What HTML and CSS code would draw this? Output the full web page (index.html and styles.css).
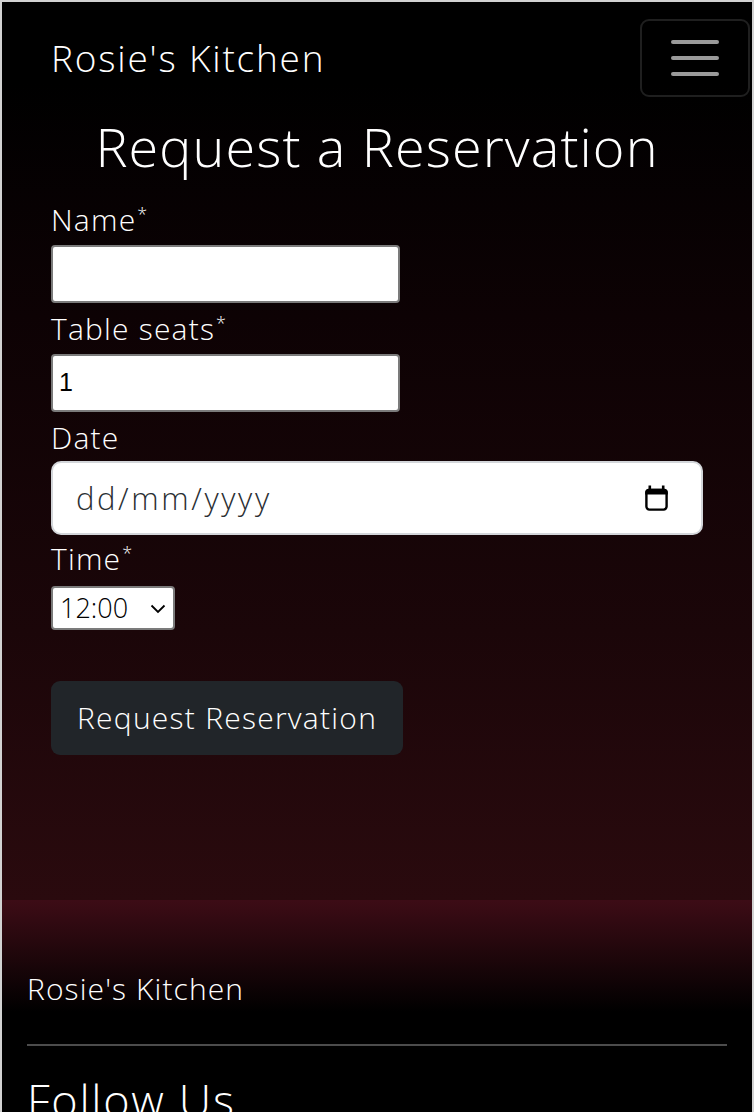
FILE: index.html
```html
<!DOCTYPE html>
<html lang="en">
<head>
<meta charset="utf-8">
<title>Request a Reservation - Rosie's Kitchen</title>
<link rel="stylesheet" href="styles.css">
</head>
<body>
<div class="page">
  <div class="hero">
    <header class="navbar">
      <a class="brand" href="#">Rosie's Kitchen</a>
      <button class="toggler" type="button" aria-label="Toggle navigation">
        <span class="bar"></span><span class="bar"></span><span class="bar"></span>
      </button>
    </header>
    <main class="main">
      <h1 class="title">Request a Reservation</h1>
      <form class="form">
        <label class="field-label" for="name">Name<sup class="req">*</sup></label>
        <input class="plain-input" id="name" type="text">
        <label class="field-label" for="seats">Table seats<sup class="req">*</sup></label>
        <input class="plain-input num" id="seats" type="text" value="1">
        <label class="field-label" for="date">Date</label>
        <div class="date-field">
          <input class="date-input" id="date" type="text" placeholder="dd/mm/yyyy">
          <svg class="cal-icon" width="25" height="26" viewBox="0 0 25 26" aria-hidden="true">
            <rect x="4.5" y="0.5" width="2.6" height="5" fill="#000"/>
            <rect x="17.9" y="0.5" width="2.6" height="5" fill="#000"/>
            <path d="M1.2 7.5 Q1.2 3.8 4.8 3.8 H20.2 Q23.8 3.8 23.8 7.5 V9.6 H1.2 Z" fill="#000"/>
            <rect x="2.4" y="5" width="20.2" height="19.6" rx="3" fill="none" stroke="#000" stroke-width="2.4"/>
          </svg>
        </div>
        <label class="field-label time-label" for="time">Time<sup class="req">*</sup></label>
        <div class="select-wrap">
          <select class="time-select" id="time">
            <option>12:00</option>
            <option>13:00</option>
            <option>14:00</option>
          </select>
          <svg class="chev" width="16" height="10" viewBox="0 0 16 10" aria-hidden="true">
            <path d="M1.5 1.5 L8 8 L14.5 1.5" fill="none" stroke="#000" stroke-width="1.8"/>
          </svg>
        </div>
        <div class="actions">
          <button class="btn-submit" type="submit">Request Reservation</button>
        </div>
      </form>
    </main>
  </div>
  <footer class="footer">
    <p class="footer-brand">Rosie's Kitchen</p>
    <hr class="footer-rule">
    <h2 class="footer-heading">Follow Us</h2>
  </footer>
</div>
</body>
</html>
```

FILE: styles.css
```css
html, body {
  margin: 0;
  padding: 0;
}

body {
  background: #000;
  color: #fff;
  font-family: "Open Sans", "Lato", "DejaVu Sans", sans-serif;
  font-weight: 300;
}

.page {
  border: 2px solid #d2d2d2;
  border-bottom: none;
  min-height: 1300px;
  background: #000;
}

.hero {
  background: linear-gradient(180deg, #000 9%, #0d0204 35%, #1b0609 70%, #2a0a0e 100%);
  padding-bottom: 145px;
}

/* Navbar */
.navbar {
  display: flex;
  justify-content: space-between;
  align-items: center;
  padding: 17px 2px 0 49px;
}

.brand {
  color: #fff;
  text-decoration: none;
  font-size: 37px;
  line-height: 1.5;
  letter-spacing: 1.8px;
}

.toggler {
  width: 110px;
  height: 78px;
  background: transparent;
  border: 2px solid #1f1f1f;
  border-radius: 9px;
  display: flex;
  flex-direction: column;
  align-items: center;
  justify-content: center;
  gap: 12.5px;
  padding: 0;
}

.bar {
  display: block;
  width: 48px;
  height: 3.5px;
  border-radius: 2px;
  background: #9a9a9a;
}

/* Main */
.title {
  margin: 17px 0 18px;
  text-align: center;
  font-size: 54px;
  font-weight: 300;
  line-height: 1.2;
  letter-spacing: 1.1px;
}

.form {
  padding: 0 49px;
  display: flex;
  flex-direction: column;
  align-items: flex-start;
}

.field-label {
  display: block;
  font-size: 30px;
  line-height: 45px;
  letter-spacing: 1.2px;
  color: #fff;
}

.req {
  font-size: 18px;
  vertical-align: baseline;
  position: relative;
  top: -10px;
  line-height: 1;
  letter-spacing: 0;
  margin-left: 1px;
}

.plain-input {
  box-sizing: border-box;
  width: 349px;
  height: 58px;
  margin: 3px 0;
  border: 2px solid #7b7b7b;
  border-radius: 4px;
  background: #fff;
  font-family: "Liberation Sans", Arial, sans-serif;
  font-size: 25px;
  padding: 0 6px;
  color: #000;
}

.date-field {
  box-sizing: border-box;
  width: 652px;
  height: 74px;
  margin: 1px 0 1px;
  border: 2px solid #d3d6da;
  border-radius: 10px;
  background: #fff;
  display: flex;
  align-items: center;
  padding: 0 32px 0 23px;
}

.date-input {
  flex: 1;
  border: none;
  outline: none;
  background: transparent;
  font-family: inherit;
  font-weight: 300;
  font-size: 31px;
  letter-spacing: 2.6px;
  color: #212529;
  padding: 0;
}

.date-input::placeholder {
  color: #2b2f33;
  opacity: 1;
}

.cal-icon {
  flex: none;
  margin-top: 1px;
}

.time-label {
  margin-bottom: 5px;
}

.select-wrap {
  position: relative;
  display: inline-block;
}

.time-select {
  appearance: none;
  -webkit-appearance: none;
  box-sizing: border-box;
  width: 124px;
  height: 44px;
  border: 2px solid #7b7b7b;
  border-radius: 4px;
  background: #fff;
  color: #000;
  font-family: inherit;
  font-weight: 300;
  font-size: 27px;
  padding: 0 0 0 7px;
  margin: 0;
}

.chev {
  position: absolute;
  left: 99px;
  top: 18px;
  pointer-events: none;
}

.actions {
  margin-top: 51px;
}

.btn-submit {
  height: 74px;
  padding: 0 26px;
  border: none;
  border-radius: 9px;
  background: #212529;
  color: #fff;
  font-family: inherit;
  font-weight: 300;
  font-size: 30px;
  line-height: 1.5;
  letter-spacing: 1.25px;
}

/* Footer */
.footer {
  background: linear-gradient(180deg, #3d0c16 0, #22070c 50px, #000 112px);
  padding: 66px 25px 40px;
}

.footer-brand {
  margin: 0;
  font-size: 30px;
  line-height: 45px;
  letter-spacing: 1.1px;
}

.footer-rule {
  margin: 33px 0 27px;
  border: none;
  border-top: 2px solid #4c4c4c;
  height: 0;
}

.footer-heading {
  margin: 0;
  font-size: 45px;
  font-weight: 300;
  line-height: 1.2;
  letter-spacing: 1.7px;
}
```
